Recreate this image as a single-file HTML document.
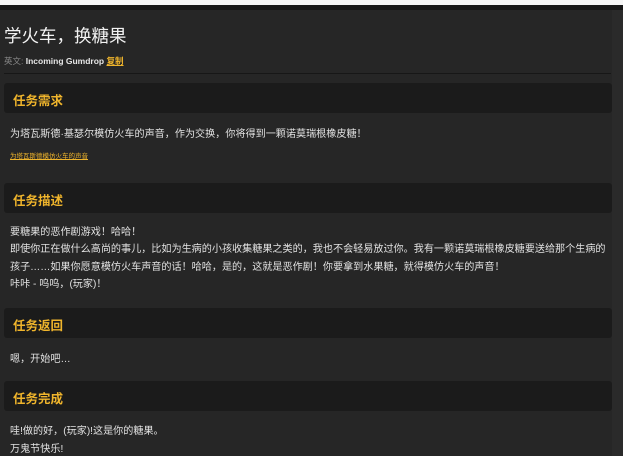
<!DOCTYPE html>
<html><head><meta charset="utf-8"><style>
body{margin:0;width:623px;height:456px;overflow:hidden;background:#2a2a2a;font-family:"Liberation Sans","Noto Sans CJK SC",sans-serif;position:relative}
.a{position:absolute;white-space:nowrap}
.t{color:#e2e2e2;font-size:10.1px;left:10px}
.h{position:absolute;left:4px;width:608px;height:30px;background:#1b1b1b;border-radius:3px}
.h span{position:absolute;left:9px;top:7px;color:#f0b52c;font-size:12.5px;font-weight:bold}
</style></head><body>
<div class="a" style="left:0;top:0;width:623px;height:5px;background:#f5f5f5"></div>
<div class="a" style="left:0;top:5px;width:623px;height:5px;background:#171717"></div>
<div class="a" style="left:0;top:10px;width:612px;height:446px;background:#262626"></div>
<div class="a" style="left:4px;top:23px;color:#f2f2f2;font-size:17.5px">学火车，换糖果</div>
<div class="a" style="left:4px;top:55px;font-size:8.5px;color:#888">英文: <b style="color:#e6e6e6">Incoming Gumdrop</b> <b style="color:#f0b52c;text-decoration:underline">复制</b></div>
<div class="a" style="left:4px;top:73px;width:607px;height:1px;background:#171717"></div>
<div class="h" style="top:83px"><span>任务需求</span></div>
<div class="a t" style="top:125px">为塔瓦斯德·基瑟尔模仿火车的声音，作为交换，你将得到一颗诺莫瑞根橡皮糖！</div>
<div class="a" style="left:10px;top:150px;font-size:6.5px;color:#f0b52c;text-decoration:underline">为塔瓦斯德模仿火车的声音</div>
<div class="h" style="top:183px"><span>任务描述</span></div>
<div class="a t" style="top:223px">要糖果的恶作剧游戏！哈哈！</div>
<div class="a t" style="top:240px">即使你正在做什么高尚的事儿，比如为生病的小孩收集糖果之类的，我也不会轻易放过你。我有一颗诺莫瑞根橡皮糖要送给那个生病的</div>
<div class="a t" style="top:258px">孩子……如果你愿意模仿火车声音的话！哈哈，是的，这就是恶作剧！你要拿到水果糖，就得模仿火车的声音！</div>
<div class="a t" style="top:275px">咔咔 - 呜呜，(玩家)！</div>
<div class="h" style="top:308px"><span>任务返回</span></div>
<div class="a t" style="top:350px">嗯，开始吧…</div>
<div class="h" style="top:381px"><span>任务完成</span></div>
<div class="a t" style="top:422px">哇!做的好，(玩家)!这是你的糖果。</div>
<div class="a t" style="top:440px">万鬼节快乐!</div>
</body></html>
